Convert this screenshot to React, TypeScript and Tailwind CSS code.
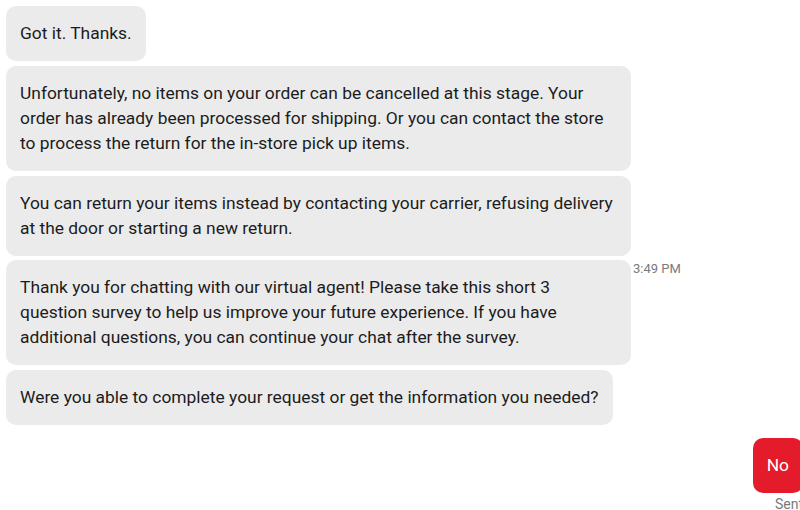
const font = { fontFamily: 'Roboto, "Noto Sans", sans-serif' };

const Bubble = ({ children, wide }: any) => (
  <div
    className={`bg-[#ebebeb] rounded-[10px] px-[14px] py-[15px] text-[17.4px] leading-[25px] text-[#1c1c1c] ${wide ? 'w-[625px]' : 'w-fit'}`}
  >
    {children}
  </div>
);

export default function App() {
  return (
    <div className="w-[800px] h-[510px] overflow-hidden bg-white" style={font}>
      <div className="w-[805px] pt-[6px] pl-[6px] flex flex-col gap-[4.8px]">
        <Bubble>Got it. Thanks.</Bubble>
        <Bubble wide>
          Unfortunately, no items on your order can be cancelled at this stage. Your order has already been processed for shipping. Or you can contact the store to process the return for the in-store pick up items.
        </Bubble>
        <Bubble wide>
          You can return your items instead by contacting your carrier, refusing delivery at the door or starting a new return.
        </Bubble>
        <div className="flex items-start">
          <Bubble wide>
            Thank you for chatting with our virtual agent! Please take this short 3 question survey to help us improve your future experience. If you have additional questions, you can continue your chat after the survey.
          </Bubble>
          <span className="ml-[2px] mt-[1px] text-[13px] leading-[16px] text-[#7a7a7a]">3:49 PM</span>
        </div>
        <Bubble>Were you able to complete your request or get the information you needed?</Bubble>
        <div className="flex flex-col items-end mt-[8px] pr-[2px]">
          <div className="bg-[#e31b2b] text-white rounded-[10px] px-[14px] py-[15px] text-[17.4px] leading-[25px]">No</div>
          <span className="mt-[2px] text-[14px] leading-[18px] text-[#7a7a7a]">Sent</span>
        </div>
      </div>
    </div>
  );
}
